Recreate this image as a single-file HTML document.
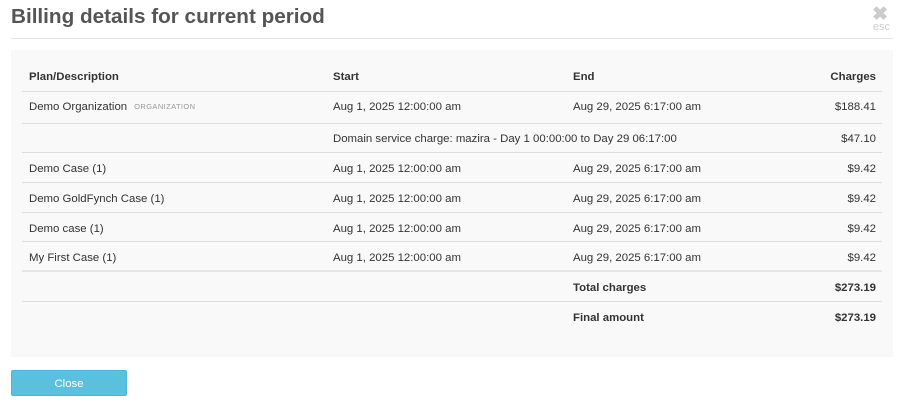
<!DOCTYPE html>
<html><head><style>
body{margin:0;width:900px;height:407px;background:#fff;font-family:"Liberation Sans",sans-serif;color:#333;position:relative;overflow:hidden}
h1{position:absolute;left:11px;top:5px;margin:0;font-size:20.7px;font-weight:bold;color:#555}
.rule{position:absolute;left:11px;width:882px;top:38px;border-top:1px solid #e5e5e5}
.x{position:absolute;right:12px;top:3px;color:#ccc;font-size:19px;font-weight:bold}
.esc{position:absolute;right:10px;top:21px;color:#ccc;font-size:11px}
.panel{position:absolute;left:11px;top:50px;width:882px;height:307px;background:#f9f9f9}
.row{position:absolute;left:22px;width:860px;font-size:11.4px;border-bottom:1px solid #ddd}
.row span{position:absolute;white-space:nowrap;margin-top:2px}
.c1{left:7px}.c2{left:311px}.c3{left:551px}.c4{right:6px}
.b{font-weight:bold}
.tag{position:static!important;font-size:7.5px;color:#999;margin-left:7px;letter-spacing:.4px;vertical-align:1px}
.btn{position:absolute;left:11px;top:370px;width:114px;height:24px;background:#5bc0de;border:1px solid #46b8da;border-radius:2px;color:#fff;font-size:11.4px;text-align:center;line-height:26px}
</style></head><body>
<h1>Billing details for current period</h1>
<div class="x">✖</div><div class="esc">esc</div>
<div class="rule"></div>
<div class="panel"></div>
<div class="row b" style="top:60px;height:31px"><span class="c1" style="top:9px">Plan/Description</span><span class="c2" style="top:9px">Start</span><span class="c3" style="top:9px">End</span><span class="c4" style="top:9px">Charges</span></div>
<div class="row" style="top:92px;height:31px"><span class="c1" style="top:7px">Demo Organization<span class="tag">ORGANIZATION</span></span><span class="c2" style="top:7px">Aug 1, 2025 12:00:00 am</span><span class="c3" style="top:7px">Aug 29, 2025 6:17:00 am</span><span class="c4" style="top:7px">$188.41</span></div>
<div class="row" style="top:124px;height:28px"><span class="c2" style="top:7px">Domain service charge: mazira - Day 1 00:00:00 to Day 29 06:17:00</span><span class="c4" style="top:7px">$47.10</span></div>
<div class="row" style="top:153px;height:29px"><span class="c1" style="top:8px">Demo Case (1)</span><span class="c2" style="top:8px">Aug 1, 2025 12:00:00 am</span><span class="c3" style="top:8px">Aug 29, 2025 6:17:00 am</span><span class="c4" style="top:8px">$9.42</span></div>
<div class="row" style="top:183px;height:29px"><span class="c1" style="top:8px">Demo GoldFynch Case (1)</span><span class="c2" style="top:8px">Aug 1, 2025 12:00:00 am</span><span class="c3" style="top:8px">Aug 29, 2025 6:17:00 am</span><span class="c4" style="top:8px">$9.42</span></div>
<div class="row" style="top:213px;height:28px"><span class="c1" style="top:8px">Demo case (1)</span><span class="c2" style="top:8px">Aug 1, 2025 12:00:00 am</span><span class="c3" style="top:8px">Aug 29, 2025 6:17:00 am</span><span class="c4" style="top:8px">$9.42</span></div>
<div class="row" style="top:242px;height:28px;border-bottom:2px solid #e5e5e5"><span class="c1" style="top:8px">My First Case (1)</span><span class="c2" style="top:8px">Aug 1, 2025 12:00:00 am</span><span class="c3" style="top:8px">Aug 29, 2025 6:17:00 am</span><span class="c4" style="top:8px">$9.42</span></div>
<div class="row b" style="top:272px;height:29px"><span class="c3" style="top:8px">Total charges</span><span class="c4" style="top:8px">$273.19</span></div>
<div class="row b" style="top:302px;height:30px;border:none"><span class="c3" style="top:8px">Final amount</span><span class="c4" style="top:8px">$273.19</span></div>
<div class="btn">Close</div>
</body></html>
